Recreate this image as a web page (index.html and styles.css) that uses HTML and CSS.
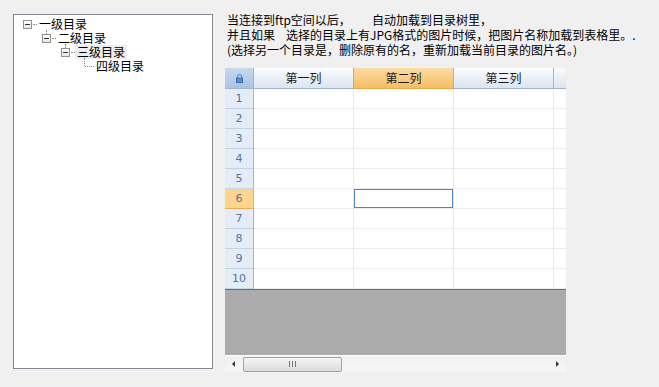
FILE: index.html
```html
<!DOCTYPE html>
<html lang="zh-CN">
<head>
  <meta charset="UTF-8" />
  <title>目录树</title>
  <link rel="stylesheet" href="styles.css">
</head>
<body>
  <div class="window">
    <div class="tree">
      <div class="node l1"><span class="exp"></span><span class="dots"></span><span class="label">一级目录</span></div>
      <div class="node l2"><span class="exp up"></span><span class="dots"></span><span class="label">二级目录</span></div>
      <div class="node l3"><span class="exp up"></span><span class="dots"></span><span class="label current">三级目录</span></div>
      <div class="node l4"><span class="leaf"></span><span class="label">四级目录</span></div>
    </div>

    <div class="main">
      <p class="note">当连接到ftp空间以后，<span class="gap wide"></span>自动加载到目录树里，<br>并且如果<span class="gap"></span>选择的目录上有JPG格式的图片时候，把图片名称加载到表格里。.<br>(选择另一个目录是，删除原有的名，重新加载当前目录的图片名。)</p>

      <div class="grid">
        <div class="row head">
          <div class="corner">
            <svg width="7" height="9" viewBox="0 0 7 9"><path d="M1.5 4V2.5a2 2 0 0 1 4 0V4" fill="none" stroke="#4f7ec4" stroke-width="1"/><rect x="0.5" y="4" width="6" height="4.5" fill="#5f8ed0" stroke="#3f6cb0" stroke-width="1"/></svg>
          </div>
          <div class="col">第一列</div>
          <div class="col sel">第二列</div>
          <div class="col">第三列</div>
          <div class="col"></div>
        </div>
        <div class="row"><div class="num">1</div><div class="cell"></div><div class="cell"></div><div class="cell"></div><div class="cell"></div></div>
        <div class="row"><div class="num">2</div><div class="cell"></div><div class="cell"></div><div class="cell"></div><div class="cell"></div></div>
        <div class="row"><div class="num">3</div><div class="cell"></div><div class="cell"></div><div class="cell"></div><div class="cell"></div></div>
        <div class="row"><div class="num">4</div><div class="cell"></div><div class="cell"></div><div class="cell"></div><div class="cell"></div></div>
        <div class="row"><div class="num">5</div><div class="cell"></div><div class="cell"></div><div class="cell"></div><div class="cell"></div></div>
        <div class="row"><div class="num active">6</div><div class="cell"></div><div class="cell focus"></div><div class="cell"></div><div class="cell"></div></div>
        <div class="row"><div class="num">7</div><div class="cell"></div><div class="cell"></div><div class="cell"></div><div class="cell"></div></div>
        <div class="row"><div class="num">8</div><div class="cell"></div><div class="cell"></div><div class="cell"></div><div class="cell"></div></div>
        <div class="row"><div class="num">9</div><div class="cell"></div><div class="cell"></div><div class="cell"></div><div class="cell"></div></div>
        <div class="row"><div class="num">10</div><div class="cell"></div><div class="cell"></div><div class="cell"></div><div class="cell"></div></div>
        <div class="empty"></div>
        <div class="hscroll">
          <span class="arrow left"></span>
          <div class="track">
            <div class="thumb"><span class="grip"></span></div>
          </div>
          <span class="arrow right"></span>
        </div>
      </div>
    </div>
  </div>
</body>
</html>
```

FILE: styles.css
```css
* {
  box-sizing: border-box;
}
body {
  margin: 0;
  background-color: #f0f0f0;
  color: #000;
  font-family: "Noto Sans CJK SC", "DejaVu Sans", sans-serif;
  font-size: 12px;
}
.window {
  display: flex;
  align-items: flex-start;
  gap: 12px;
  padding: 12px 0 0 13px;
}

/* tree */
.tree {
  width: 200px;
  height: 355px;
  margin-top: 2px;
  padding-top: 2px;
  background: #fff;
  border: 1px solid #828790;
}
.node {
  display: flex;
  align-items: center;
  height: 14px;
  line-height: 14px;
  white-space: nowrap;
}
.l1 { padding-left: 9px; }
.l2 { padding-left: 28px; }
.l3 { padding-left: 47px; }
.l4 { padding-left: 66px; }
.exp {
  position: relative;
  width: 9px;
  height: 9px;
  border: 1px solid #919191;
  background: linear-gradient(#fff, #e6e6e6);
}
.exp::before {
  content: "";
  position: absolute;
  left: 1px;
  top: 3px;
  width: 5px;
  height: 1px;
  background: #333;
}
.exp.up::after {
  content: "";
  position: absolute;
  left: 3px;
  top: -5px;
  height: 4px;
  border-left: 1px dotted #8a8a8a;
}
.dots {
  width: 4px;
  margin: 0 2px 0 1px;
  border-top: 1px dotted #8a8a8a;
}
.leaf {
  position: relative;
  width: 16px;
  height: 14px;
}
.leaf::before {
  content: "";
  position: absolute;
  left: 4px;
  top: -1px;
  height: 8px;
  border-left: 1px dotted #8a8a8a;
}
.leaf::after {
  content: "";
  position: absolute;
  left: 5px;
  top: 7px;
  width: 9px;
  border-top: 1px dotted #8a8a8a;
}
.label.current {
  background: #ececec;
  margin-left: -2px;
  padding: 0 2px;
}

/* note */
.note {
  margin: 0 0 11px 2px;
  line-height: 15px;
  white-space: nowrap;
}
.gap {
  display: inline-block;
  width: 11px;
}
.gap.wide {
  width: 21px;
}

/* grid */
.grid {
  width: 341px;
  height: 304px;
  display: flex;
  flex-direction: column;
  overflow: hidden;
  background: #fff;
}
.row {
  display: flex;
  flex: none;
  height: 20px;
}
.row.head {
  height: 21px;
}
.corner {
  flex: none;
  width: 29px;
  display: flex;
  align-items: center;
  justify-content: center;
  background: linear-gradient(#c6d8ef, #a9c3e6);
  border-right: 1px solid #9eb6ce;
  border-bottom: 1px solid #9eb6ce;
}
.col {
  flex: none;
  width: 100px;
  text-align: center;
  line-height: 20px;
  color: #1b1b1b;
  background: linear-gradient(#fbfcfe, #dbe4f0);
  border-right: 1px solid #9eb6ce;
  border-bottom: 1px solid #9eb6ce;
}
.col.sel {
  background: linear-gradient(#fbdca6, #f6bd62);
  border-color: #e9a94a;
}
.num {
  flex: none;
  width: 29px;
  text-align: center;
  line-height: 20px;
  font-family: "DejaVu Sans", sans-serif;
  font-size: 11px;
  color: #55729a;
  background: #e4ecf7;
  border-right: 1px solid #9eb6ce;
  border-bottom: 1px solid #c3d2e4;
}
.num.active {
  background: #ffd58d;
  border-right-color: #f0ad4a;
  border-bottom-color: #f0ad4a;
}
.cell {
  flex: none;
  width: 100px;
  border-right: 1px solid #e8e8e8;
  border-bottom: 1px solid #ececec;
}
.cell.focus {
  box-shadow: inset 0 0 0 1px #4f86c6;
}
.empty {
  flex: none;
  height: 66px;
  background: #ababab;
  border-top: 1px solid #6e6e6e;
}
.hscroll {
  flex: none;
  display: flex;
  align-items: center;
  height: 17px;
  background: linear-gradient(#f0f0f0, #f6f6f6);
  border-top: 1px solid #fff;
}
.arrow {
  width: 0;
  height: 0;
  border-top: 3px solid transparent;
  border-bottom: 3px solid transparent;
}
.arrow.left {
  margin: 0 8px 0 7px;
  border-right: 3px solid #333;
}
.arrow.right {
  margin: 0 7px 0 8px;
  border-left: 3px solid #333;
}
.track {
  flex: 1;
  height: 15px;
}
.thumb {
  width: 99px;
  height: 15px;
  display: flex;
  align-items: center;
  justify-content: center;
  background: linear-gradient(#f5f5f5, #dcdcdc);
  border: 1px solid #a2a2a2;
  border-radius: 2px;
}
.grip {
  width: 7px;
  height: 6px;
  border-left: 1px solid #777;
  border-right: 1px solid #777;
  background: linear-gradient(90deg, transparent 2px, #777 2px, #777 3px, transparent 3px);
}
```
